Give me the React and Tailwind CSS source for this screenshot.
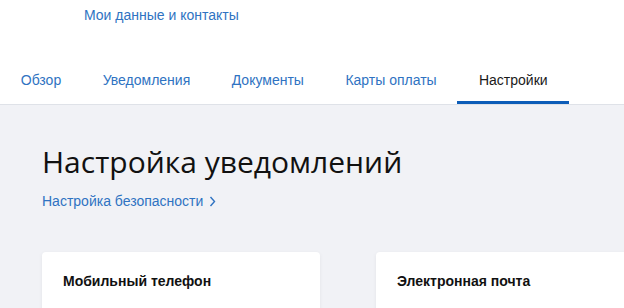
const tabs = ['Обзор', 'Уведомления', 'Документы', 'Карты оплаты', 'Настройки'];

const App = () => {
  return (
    <div className="w-[624px] h-[308px] overflow-hidden bg-[#f1f2f6] font-['Liberation_Sans',Arial,sans-serif]">
      {/* Header */}
      <header className="bg-white border-b border-[#dfe2e8]">
        <div className="pl-[84px] pt-[6px]">
          <a className="block text-[14px] leading-[18px] text-[#2f73c2]">Мои данные и контакты</a>
        </div>
        <nav className="flex mt-[47px]">
          {tabs.map((tab, i) => {
            const active = i === tabs.length - 1;
            return (
              <div
                key={tab}
                className={
                  active
                    ? 'px-[21.5px] pb-[12px] text-[14px] leading-[18px] text-[#1a1a1a] border-b-[3px] border-[#0d5db8]'
                    : 'px-[20.75px] pb-[12px] text-[14px] leading-[18px] text-[#2f73c2] border-b-[3px] border-transparent'
                }
              >
                {tab}
              </div>
            );
          })}
        </nav>
      </header>

      {/* Content */}
      <main className="pl-[42px] pt-[37px]">
        <h1 className="font-['Open_Sans',sans-serif] text-[30px] leading-[40px] text-[#111]">Настройка уведомлений</h1>
        <a className="mt-[10px] flex items-center gap-[6px] text-[14px] leading-[18px] text-[#2f73c2]">
          Настройка безопасности
          <svg width="7" height="11" viewBox="0 0 7 11" fill="none">
            <path d="M1.5 1L5.5 5.5L1.5 10" stroke="#2f73c2" strokeWidth="1.4" />
          </svg>
        </a>

        <div className="flex gap-[56px] mt-[42px]">
          <div className="w-[278px] shrink-0 h-[80px] bg-white rounded-[4px] shadow-[0_1px_4px_rgba(0,0,0,0.06)] pl-[21px] pt-[20px]">
            <h3 className="text-[14px] leading-[18px] font-bold text-[#111]">Мобильный телефон</h3>
          </div>
          <div className="w-[278px] shrink-0 h-[80px] bg-white rounded-[4px] shadow-[0_1px_4px_rgba(0,0,0,0.06)] pl-[21px] pt-[20px]">
            <h3 className="text-[14px] leading-[18px] font-bold text-[#111]">Электронная почта</h3>
          </div>
        </div>
      </main>
    </div>
  );
};

export default App;
